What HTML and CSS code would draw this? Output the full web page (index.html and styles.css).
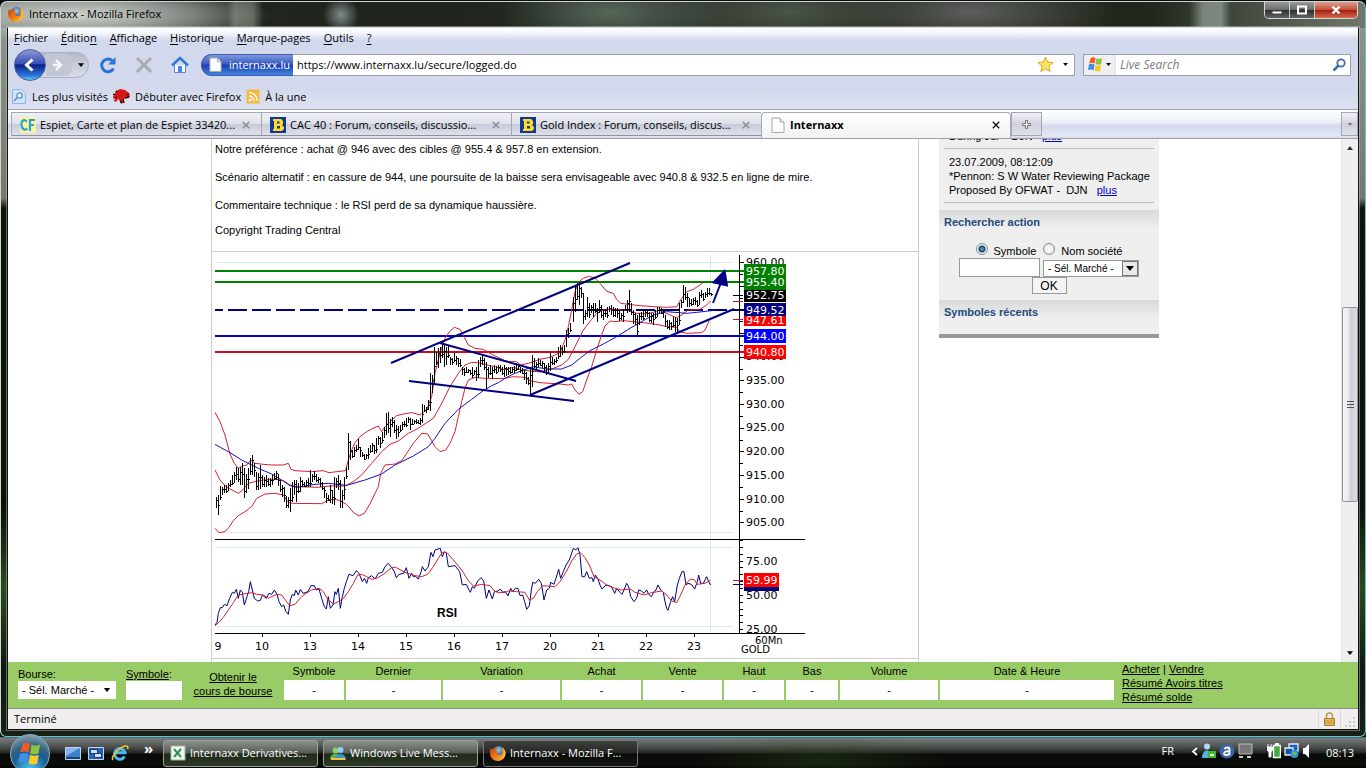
FILE: index.html
```html
<!DOCTYPE html>
<html lang="fr">
<head>
<meta charset="utf-8">
<title>Internaxx - Mozilla Firefox</title>
<link rel="stylesheet" href="styles.css">
</head>
<body>
<svg class="defs" width="0" height="0" aria-hidden="true">
  <defs>
    <radialGradient id="fxBlue" cx=".5" cy=".35" r=".6"><stop offset="0" stop-color="#8fd0f5"/><stop offset="1" stop-color="#173a86"/></radialGradient>
    <linearGradient id="fxOrange" x1="0" y1="0" x2="1" y2="1"><stop offset="0" stop-color="#c7430a"/><stop offset=".6" stop-color="#f58518"/><stop offset="1" stop-color="#ffd24a"/></linearGradient>
    <symbol id="firefox" viewBox="0 0 16 16">
      <circle cx="8.5" cy="7" r="6" fill="url(#fxBlue)"/>
      <path d="M1 3l1.500 1.500C4 3 6 3 7 4L6 6l3 1-2 1.500c1 2 4 2 5 0 1-2 0-4-2-6 4 .5 6 4 5.500 7C15 13 12 16 8 16S0 13 0 8.500C0 6 .4 4.500 1 3z" fill="url(#fxOrange)"/>
      <path d="M12 2c3 2 4 5 3 8-1 3-3 4-5 4.500 3-2 4-4 3.600-7C13.500 5 13 3.500 12 2z" fill="#ffc53a"/>
    </symbol>
    <symbol id="boursorama" viewBox="0 0 16 16">
      <path fill="#123a8c" d="M0 0h16v16H0z"/>
      <path fill="#ffd92e" d="M3 2h8l2 2v3l-1 1 2 2v2l-2 2H3v-2h1V4H3z"/>
      <path fill="#123a8c" d="M7 4.500h2.500v2H7zM7 9h3v2.500H7z"/>
    </symbol>
    <symbol id="page" viewBox="0 0 14 16">
      <path d="M1 1h8l4 4v10.500H1z" fill="#fdfdfd" stroke="#a9a9a9"/><path d="M9 1v4h4" fill="#eee" stroke="#a9a9a9"/>
    </symbol>
    <symbol id="cross" viewBox="0 0 10 10"><path d="M1 1l8 8M9 1L1 9" stroke="currentColor" stroke-width="1.600" fill="none"/></symbol>
    <symbol id="down" viewBox="0 0 8 5"><path d="M0 0h8L4 5z" fill="currentColor"/></symbol>
    <symbol id="winflag" viewBox="0 0 18 18">
      <path d="M4 2c2-1 4-1 5 0L8 8C6 7 4 7 2 8z" fill="#ee5a24"/><path d="M10 2.500c2 1 4 1 6 0L15 8.500c-2 1-4 1-6 0z" fill="#8bc53f"/>
      <path d="M2 9c2-1 4-1 6 0L7 15c-2-1-4-1-6 0z" fill="#3f8fe8"/><path d="M9 9.500c2 1 4 1 6 0L14 15.500c-2 1-4 1-6 0z" fill="#fbc926"/>
    </symbol>
  </defs>
</svg>

<div class="window">
  <header class="titlebar">
    <svg class="i16"><use href="#firefox"/></svg>
    <h1 class="window-title">Internaxx - Mozilla Firefox</h1>
    <div class="window-buttons">
      <button class="wb" aria-label="Réduire"><svg width="12" height="10"><path d="M1 6h10v3H1z" fill="#fff" stroke="#444"/></svg></button>
      <button class="wb wb-max" aria-label="Agrandir"><svg width="12" height="10"><path d="M2 1.500h8v7H2z" fill="none" stroke="#fff" stroke-width="2"/><path d="M4.500 4h3v2h-3z" fill="#333"/></svg></button>
      <button class="wb wb-close" aria-label="Fermer"><svg width="12" height="10"><path d="M2.500 1.500l7 7M9.500 1.500l-7 7" stroke="#fff" stroke-width="2.400"/></svg></button>
    </div>
  </header>

  <div class="client">
    <div class="chrome">
      <nav class="menubar" aria-label="Menu">
        <button><u>F</u>ichier</button><button><u>É</u>ditio<u>n</u></button><button><u>A</u>ffichage</button><button><u>H</u>istorique</button><button><u>M</u>arque-pages</button><button><u>O</u>utils</button><button><u>?</u></button>
      </nav>
      <div class="navbar">
        <div class="history">
          <button class="back" aria-label="Précédent"><svg width="16" height="16"><path d="M10.500 2.500L4.500 8l6 5.500" fill="none" stroke="#fff" stroke-width="3"/></svg></button>
          <button class="forward" aria-label="Suivant"><svg width="14" height="14"><path d="M4 2l5 5-5 5M1 7h7" fill="none" stroke="#f4f5f9" stroke-width="2.500"/></svg></button>
          <button class="recent" aria-label="Historique récent"><svg width="6" height="4"><use href="#down"/></svg></button>
        </div>
        <button class="tool" aria-label="Actualiser"><svg width="18" height="18"><path d="M14.500 12.500A6.300 6.300 0 1 1 13 4.500" fill="none" stroke="#2a72d8" stroke-width="3"/><path d="M16.500 1v7.500H9z" fill="#2a72d8"/></svg></button>
        <button class="tool" aria-label="Arrêter"><svg width="18" height="18"><path d="M2 2l14 14M16 2L2 16" stroke="#a9abb2" stroke-width="3"/></svg></button>
        <button class="tool" aria-label="Accueil"><svg width="18" height="18"><path d="M3.500 9v7.500h11V9" fill="#f4f8ff" stroke="#5b87cc"/><path d="M1 9.500L9 2l8 7.500" fill="none" stroke="#3478d6" stroke-width="2.500"/><path d="M7 10h4v6H7z" fill="#4a86dc"/></svg></button>
        <div class="url">
          <span class="site"><svg width="13" height="15"><use href="#page"/></svg>internaxx.lu</span>
          <input type="text" aria-label="Adresse" value="https://www.internaxx.lu/secure/logged.do">
          <svg width="17" height="17" viewBox="0 0 17 17"><path d="M8.500 1l2.200 5 5.300.6-4 3.600 1.100 5.300-4.600-2.700-4.600 2.700L5 10.200 1 6.600 6.300 6z" fill="#ffe066" stroke="#dfa31c"/></svg>
          <svg class="url-arrow" width="5" height="3"><use href="#down"/></svg>
        </div>
        <div class="search">
          <button class="engine" aria-label="Moteur"><svg width="17" height="17"><use href="#winflag"/></svg><svg width="5" height="3"><use href="#down"/></svg></button>
          <input type="text" aria-label="Recherche" placeholder="Live Search">
          <svg width="14" height="14"><circle cx="9" cy="5" r="3.700" fill="none" stroke="#3c6fb0" stroke-width="1.800"/><path d="M6.500 7.500L1.500 12.500" stroke="#3c6fb0" stroke-width="2.600"/></svg>
        </div>
      </div>
      <div class="bookmarks">
        <a href="#"><svg width="14" height="15"><path d="M.5.5h9l4 4v10H.500z" fill="#cfe3fa" stroke="#8db6e4"/><circle cx="7.500" cy="6.500" r="2.700" fill="#f5faff" stroke="#5b8fd0" stroke-width="1.300"/><path d="M5.500 8.500l-3.500 3.500" stroke="#5b8fd0" stroke-width="1.600"/></svg>Les plus visités</a>
        <a href="#"><svg width="17" height="15"><path d="M1 6l2-4 4-2 5 1 4 3 1 4-4 1-2 1v3l-3 2-1-3-2-2-2 3-2-1 1-3-3 1z" fill="#d81818"/><path d="M0 5l2 1M2 9l2-1M3 2l1 1M10 10l1 4M16 5l-2 1M12 9l4-1M7 12l2 2" stroke="#200" stroke-width="1.300"/></svg>Débuter avec Firefox</a>
        <a href="#"><svg width="14" height="15"><path d="M.5.5h13v14H.500z" fill="#f6b73c" stroke="#e3cf9a"/><circle cx="4" cy="11" r="1.500" fill="#fff"/><path d="M3 7a5 5 0 0 1 5 5M3 3.500a8.500 8.500 0 0 1 8.500 8.500" fill="none" stroke="#fff" stroke-width="1.500"/></svg>À la une</a>
      </div>
    </div>

    <div class="tabs">
      <div class="tab"><svg class="i16"><path d="M0 0h16v16H0z" fill="#fbf3a0"/><path d="M7 4.500C3 1 1 5 1.500 8.500S5 14 7.500 11.500M10 14V3h5M10 8h4" fill="none" stroke="#28a3cf" stroke-width="2.200"/></svg><a href="#">Espiet, Carte et plan de Espiet 33420...</a><button aria-label="Fermer"><svg width="8" height="8"><use href="#cross"/></svg></button></div>
      <div class="tab"><svg class="i16"><use href="#boursorama"/></svg><a href="#">CAC 40 : Forum, conseils, discussio...</a><button aria-label="Fermer"><svg width="8" height="8"><use href="#cross"/></svg></button></div>
      <div class="tab"><svg class="i16"><use href="#boursorama"/></svg><a href="#">Gold Index : Forum, conseils, discus...</a><button aria-label="Fermer"><svg width="8" height="8"><use href="#cross"/></svg></button></div>
      <div class="tab active"><svg class="i16"><use href="#page"/></svg><a href="#">Internaxx</a><button aria-label="Fermer"><svg width="8" height="8"><use href="#cross"/></svg></button></div>
      <button class="newtab" aria-label="Nouvel onglet"><svg width="9" height="9"><path d="M3.500.5h2v3h3v2h-3v3h-2v-3h-3v-2h3z" fill="#eee" stroke="#777"/></svg></button>
      <button class="alltabs" aria-label="Tous les onglets"><svg width="6" height="3"><use href="#down"/></svg></button>
    </div>

    <div class="view">
      <div class="page">
        <main class="article">
          <div class="prose">
            <p>Notre préférence : achat @ 946 avec des cibles @ 955.4 &amp; 957.8 en extension.</p>
            <p>Scénario alternatif : en cassure de 944, une poursuite de la baisse sera envisageable avec 940.8 &amp; 932.5 en ligne de mire.</p>
            <p>Commentaire technique : le RSI perd de sa dynamique haussière.</p>
            <p class="copy">Copyright Trading Central</p>
          </div>
          <div class="chart">
            <svg viewBox="212 252 594 406" width="594" height="406" role="img" aria-label="Cours de l'or, 60 minutes">
              <g class="guide"><path d="M215 262.500H733M215 532.500H733M215 547.500H733M215 626.500H733M710.500 255V632"/></g>
              <g class="levels">
                <path d="M215 271H744M215 282H744" stroke="#008000"/>
                <path d="M215 310H744" stroke="#000080" stroke-dasharray="19 5" stroke-dashoffset="11"/>
                <path d="M215 336H744" stroke="#0000cc"/>
                <path d="M215 352H744" stroke="#d00c1c"/>
              </g>
              <g class="axis">
                <path d="M739.500 255V633M215 539.500H805M215 633.500H805"/>
                <path id="ticks"/>
              </g>
              <g class="axis-text">
                <text x="746" y="266">960.00</text><text x="746" y="360">940.00</text><text x="746" y="384">935.00</text><text x="746" y="408">930.00</text><text x="746" y="431">925.00</text><text x="746" y="455">920.00</text><text x="746" y="479">915.00</text><text x="746" y="503">910.00</text><text x="746" y="526">905.00</text>
                <text x="746" y="565">75.00</text><text x="746" y="599">50.00</text><text x="746" y="633">25.00</text>
              </g>
              <g class="tags">
                <path d="M733 301.500h10M733 319.500h10M733 580.500h10" stroke="#d00c1c"/><path d="M733 295.500h10" stroke="#000"/><path d="M733 584.500h10" stroke="#000080"/>
                <path d="M744 314h42v12h-42z" fill="#f00"/><text x="746" y="324">947.61</text>
                <path d="M744 264h42v26h-42z" fill="#008000"/><text x="746" y="275">957.80</text><text x="746" y="286">955.40</text>
                <path d="M744 290h42v12h-42z" fill="#000"/><text x="746" y="299">952.75</text>
                <path d="M744 303h42v13h-42z" fill="#000080"/><text x="746" y="314">949.52</text>
                <path d="M744 329h42v14h-42z" fill="#00f"/><text x="746" y="340">944.00</text>
                <path d="M744 345h42v14h-42z" fill="#f00"/><text x="746" y="356">940.80</text>
                <path d="M744 586h35v5h-35z" fill="#000080"/><path d="M744 573h35v14h-35z" fill="#f00"/><text x="746" y="584">59.99</text>
              </g>
              <g class="axis-text days">
                <text x="218" y="650">9</text><text x="262" y="650">10</text><text x="310" y="650">13</text><text x="358" y="650">14</text><text x="406" y="650">15</text><text x="454" y="650">16</text><text x="502" y="650">17</text><text x="550" y="650">20</text><text x="598" y="650">21</text><text x="646" y="650">22</text><text x="694" y="650">23</text>
              </g>
              <g class="axis-text small"><text x="755" y="644">60Mn</text><text x="741" y="653">GOLD</text></g>
              <text class="rsi" x="437" y="617">RSI</text>
              <g class="curves" transform="translate(205 250) scale(.33333)">
                <path class="r" d="M30 487L45 515 60 555 75 612 88 640 100 655 112 648 125 645 138 630 150 640 175 643 200 645 235 645 250 640 258 658 270 662 320 665 355 662 372 668 395 665 422 662 430 630 440 600 450 578 465 560 485 545 500 537 520 528 530 545 540 530 555 515 575 497 600 491 620 488 645 495 665 480 680 440 690 370 705 310 720 265 735 243 748 232 765 238 778 262 790 285 810 295 835 298 860 313 885 325 900 332"/>
                <path class="r" d="M30 660L45 690 65 712 85 722 100 730 115 718 130 700 150 695 175 690 215 688 235 692 255 705 275 710 340 712 372 708 420 708 445 695 470 675 500 640 530 605 555 583 580 573 610 550 640 535 665 518 685 505 705 470 735 410 760 370 780 345 800 337 820 338 845 345 870 350 900 360"/>
                <path class="r" d="M30 835L42 848 60 845 72 832 85 812 100 797 120 785 140 770 155 745 180 732 210 730 235 735 248 755 262 760 350 761 375 748 400 750 425 763 445 787 462 798 478 790 495 762 510 730 520 710 527 670 540 645 570 642 590 632 605 610 625 580 650 550 668 552 680 572 690 590 705 605 722 600 735 580 750 545 760 500 770 455 780 415 790 390 810 382 850 386 900 385"/>
                <path class="b" d="M30 583L75 608 110 630 160 655 200 672 230 690 255 707 275 712 330 703 370 700 425 706 480 690 530 672 570 645 625 618 670 590 690 565 720 520 760 478 800 448 835 422 860 407 880 398 900 385"/>
              </g>
              <g class="curves" transform="translate(500 250) scale(.33333)">
                <path class="r" d="M15 332L30 335 50 335 62 345 85 340 120 328 150 322 180 308 195 270 205 230 215 180 225 125 235 97 250 85 265 79 285 84 300 100 320 124 340 130 350 148 362 160 385 163 420 167 460 170 500 172 530 170 545 145 560 125 580 118 600 105 610 97"/>
                <path class="r" d="M15 358L40 352 65 360 120 366 160 355 185 345 205 328 225 290 250 240 275 208 290 190 315 178 340 178 380 180 410 190 450 190 480 180 510 195 530 203 545 195 565 180 600 178 620 165 632 153"/>
                <path class="r" d="M15 385L40 380 75 382 90 392 120 398 180 402 205 405 215 402 225 420 237 433 248 425 260 390 275 350 290 300 305 255 315 228 330 213 345 215 370 212 400 215 430 218 480 225 500 230 530 232 540 245 560 250 605 248 615 240 628 212"/>
                <path class="b" d="M15 385L40 372 70 360 100 350 140 357 185 357 215 345 240 325 270 302 310 282 350 260 390 235 430 212 460 195 500 185 560 190 600 186 650 180"/>
              </g>
              <path id="bars"/>
              <g class="curves rsi-curves" transform="translate(205 535) scale(.33333)">
                <path class="n" d="M30 270L36 262 40 235 46 218 52 218 58 208 66 212 74 190 82 172 88 175 94 163 100 190 106 165 112 172 118 210 126 185 131 170 136 140 142 165 148 190 158 198 166 196 172 180 184 190 192 175 200 178 208 165 216 178 222 200 230 215 236 210 242 228 250 238 256 195 262 178 268 182 272 165 280 180 286 163 294 175 304 172 310 168 318 152 328 152 334 165 342 162 350 190 358 215 364 222 370 185 376 220 384 210 390 170 394 178 400 160 406 220 412 185 418 160 424 140 432 118 444 122 454 107 462 115 472 140 478 130 485 145 490 128 500 122 510 132 520 115 532 112 540 95 550 85 560 98 568 110 574 128 582 118 596 115 604 98 612 130 620 115 625 125 632 125 640 132 648 112 652 95 660 108 670 95 678 52 684 65 690 45 706 40 712 65 718 50 724 55 730 95 750 92 764 110 772 150 784 148 792 165 796 172 802 155 808 160 818 138 828 128 836 138 844 190 852 165 862 192 868 170 880 168 886 162 893 172 900 170"/>
                <path class="r" d="M30 272L42 262 55 247 70 225 85 203 100 180 115 177 140 173 155 178 175 180 190 190 215 178 230 180 245 200 255 212 270 208 285 190 300 177 320 165 342 160 355 170 370 195 385 207 400 200 415 190 430 170 445 145 458 120 470 118 485 125 500 133 515 130 540 115 560 97 572 97 600 112 630 122 650 125 668 118 685 95 700 70 712 52 725 52 745 75 770 105 790 137 805 153 830 148 855 152 868 168 880 173 900 172"/>
              </g>
              <g class="curves rsi-curves" transform="translate(500 535) scale(.33333)">
                <path class="n" d="M15 170L18 172 24 183 32 160 38 170 46 160 54 160 60 182 68 180 74 200 80 223 88 212 94 165 98 142 106 145 116 133 124 145 132 195 140 165 148 160 152 142 162 148 168 130 176 103 182 130 190 110 198 90 208 75 220 40 228 45 234 38 240 60 246 125 254 125 260 110 268 130 276 128 280 140 286 120 294 132 300 150 306 162 318 150 326 152 334 155 344 175 350 160 360 172 366 178 372 165 380 145 386 155 392 185 402 200 410 190 416 165 424 168 432 175 440 165 446 178 454 185 462 170 468 165 474 150 482 165 490 172 494 195 500 220 504 226 512 200 518 185 524 200 532 150 538 130 546 110 552 110 558 150 564 145 574 148 584 162 592 140 596 120 602 145 610 145 620 125 626 140 632 150"/>
                <path class="r" d="M15 172L25 168 50 170 75 172 88 195 100 190 112 170 128 152 165 155 180 140 200 108 215 78 230 57 242 53 255 68 268 90 282 125 300 135 320 150 345 160 365 165 390 162 405 172 432 180 455 173 485 168 500 180 515 198 530 203 542 180 555 150 570 133 582 133 592 148 615 145 632 136"/>
              </g>
              <g class="trend">
                <path d="M391 363L630 263M440 343L576 381M409 381L574 401M530 395L734 309M713 303L722 280"/>
                <path class="head" d="M724.500 271L727 285.500 713.500 282.500z"/>
              </g>
            </svg>
          </div>
        </main>

        <aside class="sidebar">
          <div class="news cut">During Jul - &nbsp;DJN &nbsp; <a href="#">plus</a></div>
          <div class="news">23.07.2009, 08:12:09<br>*Pennon: S W Water Reviewing Package<br>Proposed By OFWAT - &nbsp;DJN &nbsp; <a href="#">plus</a></div>
          <h2>Rechercher action</h2>
          <form class="find" onsubmit="return false">
            <div class="radios">
              <input type="radio" name="k" id="k1" checked><label for="k1">Symbole</label>
              <input type="radio" name="k" id="k2"><label for="k2">Nom société</label>
            </div>
            <div class="fields">
              <input type="text" aria-label="Recherche action">
              <span class="pick"><select aria-label="Marché"><option>- Sél. Marché -</option></select><span class="pick-btn"><svg width="8" height="5"><use href="#down"/></svg></span></span>
            </div>
            <button>OK</button>
          </form>
          <h2 class="last">Symboles récents</h2>
        </aside>
      </div>
      <div class="scrollbar" role="presentation">
        <svg width="6" height="4"><path d="M0 4h6L3 0z" fill="#333"/></svg>
        <div class="track"><div class="thumb"><i></i><i></i><i></i></div></div>
        <svg width="6" height="4"><use href="#down"/></svg>
      </div>
    </div>

    <div class="ticker">
      <div class="tk-field tk-market"><label for="mk">Bourse:</label><span class="pick"><select id="mk"><option>- Sél. Marché -</option></select><span class="pick-btn"><svg width="8" height="4"><use href="#down"/></svg></span></span></div>
      <div class="tk-field tk-symbol"><label for="sy"><u>Symbole</u>:</label><input id="sy" type="text"></div>
      <a class="tk-get" href="#">Obtenir le<br>cours de bourse</a>
      <table>
        <colgroup><col class="w60"><col class="w95"><col class="w117"><col class="w79"><col class="w79"><col class="w60"><col class="w52"><col class="w98"><col class="w174"></colgroup>
        <thead><tr><th>Symbole</th><th>Dernier</th><th>Variation</th><th>Achat</th><th>Vente</th><th>Haut</th><th>Bas</th><th>Volume</th><th>Date &amp; Heure</th></tr></thead>
        <tbody><tr><td>-</td><td>-</td><td>-</td><td>-</td><td>-</td><td>-</td><td>-</td><td>-</td><td>-</td></tr></tbody>
      </table>
      <div class="tk-links"><a href="#">Acheter</a> | <a href="#">Vendre</a><br><a href="#">Résumé Avoirs titres</a><br><a href="#">Résumé solde</a></div>
    </div>

    <footer class="status">
      <span>Terminé</span>
      <span class="lock"><svg width="11" height="14"><path d="M2.500 7V4a3 3 0 0 1 6 0v3" fill="none" stroke="#b99a4a" stroke-width="1.500"/><path d="M.5 6.500h10v7H.500z" fill="#e0b853" stroke="#a8812e"/><path d="M1 9h9M1 11h9" stroke="#c29a3c"/></svg></span>
      <svg class="grip" width="11" height="11"><path d="M8 1h2v2H8zM4 5h2v2H4zM8 5h2v2H8zM0 9h2v2H0zM4 9h2v2H4zM8 9h2v2H8z" fill="#c9c9ce"/></svg>
    </footer>
  </div>
</div>

<footer class="taskbar">
  <button class="start" aria-label="Démarrer"><svg width="26" height="26" viewBox="0 0 18 18"><use href="#winflag" width="18" height="18"/></svg></button>
  <div class="quick">
    <svg width="16" height="13"><path d="M.5.5h15v12H.500z" fill="#3f7fd0" stroke="#bcd4ef"/><path d="M1 1h14L1 9z" fill="#84b4ea"/><path d="M1 10h14v2H1z" fill="#1d3f7a"/></svg>
    <svg width="16" height="13"><path d="M.5.5h15v12H.500z" fill="#2a63b4" stroke="#bcd4ef"/><path d="M2.500 2.500h7v4h-7zM6.500 6.500h7v4h-7z" fill="#cfe2f7" stroke="#173a74"/></svg>
    <svg width="18" height="18"><path d="M13.500 12.500A5.300 5.300 0 1 1 14 8.700H5" fill="none" stroke="#4db4f2" stroke-width="3"/><path d="M2 16C-1 12 12 0 16.500 2.500 17 3 17 4 16.500 5" fill="none" stroke="#f2c230" stroke-width="1.600"/></svg>
    <span class="more">»</span>
  </div>
  <button class="task"><svg class="i16"><path d="M1 1h14v14H1z" fill="#f1f7f1" stroke="#9fb7a3"/><path d="M4 4l7 8M11 4l-7 8" stroke="#2f9152" stroke-width="2"/></svg><span>Internaxx Derivatives...</span></button>
  <button class="task"><svg class="i16"><circle cx="5.500" cy="5.500" r="3" fill="#8fd06a"/><path d="M0 14c0-7 11-7 11 0z" fill="#5fb347"/><circle cx="10.500" cy="5" r="3" fill="#8ccdf0"/><path d="M5 15c0-8 11-8 11 0z" fill="#3f93d0"/><path d="M1 13h14v2H1z" fill="#f0c33a"/></svg><span>Windows Live Mess...</span></button>
  <button class="task current"><svg class="i16"><use href="#firefox"/></svg><span>Internaxx - Mozilla F...</span></button>
  <div class="tray">
    <span class="lang">FR</span>
    <svg class="chev" width="7" height="9"><path d="M6 1L2 4.500 6 8" fill="none" stroke="#fff" stroke-width="1.800"/></svg>
    <svg width="15" height="16"><circle cx="6" cy="3.500" r="3" fill="#a9dcf6"/><path d="M1 15c0-10 10-10 10 0z" fill="#5aaee0"/><path d="M7 8h8v7H7z" fill="#3dbb2d"/><path d="M9 11h4v2H9z" fill="#fff"/></svg>
    <svg width="16" height="16"><circle cx="8" cy="8" r="7.500" fill="#3c64a4"/><path d="M5.500 6c1-2 5-2 5 0v6M10.500 8C4 8 4 12 7 12c2 0 3.500-1 3.500-2" fill="none" stroke="#fff" stroke-width="1.800"/></svg>
    <svg width="15" height="16"><path d="M1 1h13v10H1z" fill="#777" stroke="#bbb"/><path d="M1 13h4v2H1zM9 13h4v2H9z" fill="#ccc"/></svg>
    <svg class="gap" width="14" height="16"><path d="M6.500 2.500h7v12h-7z" fill="#3dae3d" stroke="#fff" stroke-width="1.500"/><path d="M8 0h4v2H8z" fill="#fff"/><path d="M1 1v3M4 1v3M0 4h5.500v3L4 9v5H2V9L0 7z" fill="#fff" stroke="#fff"/></svg>
    <svg width="16" height="16"><path d="M5 1h9v7H5z" fill="#1a5fc0" stroke="#e6eef8" stroke-width="1.300"/><path d="M1 5h8v7H1z" fill="#1550a8" stroke="#e6eef8" stroke-width="1.300"/><circle cx="10.500" cy="11" r="4" fill="#2f8fd8"/><path d="M8 10c2-3 3 1 5-1-1 4-3 5-5 1z" fill="#6cc04a"/></svg>
    <svg width="8" height="16"><path d="M0 5h2l4-4v14l-4-4H0z" fill="#fff"/></svg>
    <time>08:13</time>
  </div>
</footer>
<script src="chart.js"></script>
</body>
</html>
```

FILE: styles.css
```css
* { box-sizing: border-box; }
html, body { height: 100%; margin: 0; }
body {
  display: flex;
  flex-direction: column;
  overflow: hidden;
  background: #0b0e0b;
  font-family: "Open Sans", "Noto Sans", sans-serif;
  font-size: 11px;
  line-height: 16px;
  color: #000;
}
button, input, select { font: inherit; color: inherit; margin: 0; padding: 0; border: 0; background: none; border-radius: 0; outline: none; }
svg { display: block; flex: none; }
.defs { position: absolute; }
.i16 { width: 16px; height: 16px; }

/* window frame */
.window {
  flex: 1;
  min-height: 0;
  display: flex;
  flex-direction: column;
  margin-top: 1px;
  padding: 0 7px 6px;
  border: 1px solid #cfd6d2;
  border-right-color: #59c6dc;
  border-bottom-color: #59c6dc;
  border-radius: 7px 7px 6px 6px;
  background:
    radial-gradient(ellipse 190px 28px at 80px 13px, rgba(225,230,224,.85), rgba(190,196,190,.5) 60%, transparent),
    radial-gradient(circle 18px at 340px 13px, rgba(190,205,215,.6), transparent),
    linear-gradient(90deg, transparent 226px, rgba(170,180,165,.4) 234px, rgba(170,180,165,.4) 252px, transparent 262px) 0 0 / 100% 26px no-repeat,
    linear-gradient(90deg, transparent 1188px, rgba(190,205,200,.5) 1202px, rgba(190,205,200,.5) 1220px, transparent 1230px) 0 0 / 100% 26px no-repeat,
    radial-gradient(ellipse 110px 40px at 610px 10px, #57665a, transparent),
    radial-gradient(ellipse 140px 40px at 790px 10px, #4b5449, transparent),
    radial-gradient(ellipse 150px 40px at 970px 10px, #5c5f5b, transparent),
    linear-gradient(#8c938a, #74796d 170px, #0d150b 180px, #0b1208 480px, #2b4a1e 560px, #10180d 640px, #1a2417) 0 26px / 100% 100% no-repeat,
    linear-gradient(90deg, #6d736c 0, #555b55 120px, #20261f 260px, #1e241b 430px, #2a3129 700px, #161c12 900px, #20271c 1150px, #70776c);
}
.titlebar { display: flex; align-items: center; height: 25px; flex: none; }
.titlebar > .i16 { margin-bottom: 1px; }
.window-title { margin: 0 0 2px 5px; font-size: 11px; font-weight: 400; line-height: 16px; }
.window-buttons { display: flex; align-self: flex-start; margin-left: auto; border: 1px solid #d4d8d4; border-top: 0; border-radius: 0 0 5px 5px; overflow: hidden; }
.wb { display: flex; align-items: center; justify-content: center; width: 25px; height: 16px; border-right: 1px solid #c8ccc8; background: linear-gradient(#989c98, #696d69 48%, #2d312d 52%, #626662); }
.wb-close { width: 42px; border: 0; background: linear-gradient(#dba093, #c3513e 48%, #a41f0b 52%, #d36a50); }
.client { flex: 1; min-height: 0; display: flex; flex-direction: column; border: 1px solid #111; border-top-color: #d8dcd8; box-shadow: 0 0 0 1px rgba(200,208,200,.45); background: #fff; margin: 0 -1px 0 -1px; }

/* toolbars */
.chrome { flex: none; background: linear-gradient(#fff, #f4f6fc 5px, #d3d9ed 12px, #d3d8ec 60px, #dee2f1); border-bottom: 1px solid #a3a6b0; }
.menubar { display: flex; gap: 13px; height: 20px; padding-left: 6px; }
.menubar u { text-underline-offset: 2px; }
.navbar { display: flex; align-items: center; height: 33px; padding: 0 7px 0 6px; }
.history { display: flex; align-items: center; width: 75px; height: 26px; border: 1px solid #a9aec2; border-radius: 14px; background: linear-gradient(#b6bbcb, #d9dcea); }
.back { display: flex; align-items: center; justify-content: center; width: 32px; height: 32px; margin-left: -1px; flex: none; border: 1px solid #4f6096; border-radius: 50%; background: linear-gradient(#8e9ad8, #3a4db4 45%, #0b1f86 50%, #2a78d8 85%, #65c8f4); }
.forward { display: flex; align-items: center; justify-content: center; width: 26px; height: 22px; border-radius: 0 8px 8px 0; background: #c3c7d3; }
.recent { margin-left: 6px; }
.tool { margin-left: 18px; }
.history + .tool { margin-left: 10px; }
.url { flex: 1; display: flex; align-items: center; height: 22px; margin-left: 12px; border: 1px solid #9aa0ae; border-radius: 11px 0 0 11px; background: #fff; padding-right: 4px; }
.url input { flex: 1; min-width: 0; padding-left: 4px; }
.url-arrow { margin: 0 2px 0 9px; }
.site { display: flex; align-items: center; gap: 7px; width: 92px; height: 22px; margin: -1px 0 -1px -1px; padding-left: 7px; color: #fff; white-space: nowrap; border: 1px solid #3d5bb0; border-right: 0; border-radius: 11px 0 0 11px; background: linear-gradient(#7d98dc, #3a5cc4 45%, #1c3eae 50%, #3f86e0); }
.search { display: flex; align-items: center; width: 268px; height: 22px; margin-left: 8px; padding-right: 4px; border: 1px solid #9aa0ae; background: #fff; }
.engine { display: flex; align-items: center; gap: 2px; height: 20px; padding: 0 4px 0 3px; background: #efeff2; border-right: 1px solid #e2e2e6; }
.search input { flex: 1; min-width: 0; padding-left: 4px; font-size: 12px; }
.search input::placeholder { color: #7b7b7b; font-style: italic; opacity: 1; }
.bookmarks { display: flex; align-items: center; gap: 5px; height: 28px; padding: 3px 0 0 4px; }
.bookmarks a { display: flex; align-items: center; gap: 6px; color: #000; text-decoration: none; }
.bookmarks a + a { gap: 5px; }

/* tabs */
.tabs { flex: none; display: flex; align-items: flex-end; height: 29px; padding: 3px 0 2px 3px; border-bottom: 1px solid #9ea0a8; background: linear-gradient(#fff, #eff1fa 12px, #d3d9ed 16px, #e6e9f6 26px, #dcdce4 27px); }
.tab { display: flex; align-items: center; flex: 0 1 250px; min-width: 0; height: 24px; padding: 1px 11px 0 8px; border: 1px solid #a6a9b2; border-right: 0; border-bottom-color: #8e929c; background: linear-gradient(#f0f1f7, #dfe1ea 48%, #c8cbd9 52%, #dee0ea); }
.tab a { flex: 1; min-width: 0; overflow: hidden; white-space: nowrap; margin-left: 4px; color: #000; text-decoration: none; }
.tab button { color: #85868c; }
.tab.active { height: 26px; margin-bottom: -2px; padding: 0 10px 1px 8px; border-bottom: 0; border-right: 1px solid #a6a9b2; border-radius: 4px 4px 0 0; background: linear-gradient(#fff, #f2f2f4); font-weight: 700; }
.tab.active button { color: #111; }
.newtab, .alltabs { display: flex; align-items: center; justify-content: center; width: 31px; height: 24px; border: 1px solid #a6a9b2; background: linear-gradient(#f0f1f7, #d0d3df 52%, #dee0ea); }
.alltabs { width: 17px; margin-left: auto; color: #777; }

/* web page */
.view { flex: 1; min-height: 0; display: flex; font-family: "Liberation Sans", Arial, sans-serif; line-height: 14px; }
.page { flex: 1; min-width: 0; overflow: hidden; display: flex; justify-content: center; align-items: flex-start; gap: 20px; padding-left: 21px; }
.article { width: 708px; border: 1px solid #ccc; border-width: 0 1px; padding-bottom: 8px; }
.prose { padding: 3px 3px 14px; }
.prose p { margin: 0 0 14px; }
.prose .copy { margin: -3px 0 0; }
.chart { border: 1px solid #ccc; border-width: 1px 0; }
.guide path { stroke: #dce9ef; fill: none; }
.levels path { stroke-width: 2; fill: none; shape-rendering: crispEdges; }
.axis path { stroke: #000; fill: none; shape-rendering: crispEdges; }
.axis-text, .tags text { font: 11px "DejaVu Sans", Verdana, sans-serif; }
.days { text-anchor: middle; }
.small { font-size: 10px; }
.tags text { fill: #fff; }
.rsi { font: 700 12px "Liberation Sans", Arial, sans-serif; }
.curves path { fill: none; stroke-width: 3; }
.curves .r { stroke: #d2202e; }
.curves .b { stroke: #1410c0; }
.curves .n { stroke: #000080; }
#bars { stroke: #000; stroke-width: 1; fill: none; }
.trend path { stroke: #000080; stroke-width: 2; fill: none; }
.trend .head { fill: #000080; }

.sidebar { width: 220px; background: #efefef; border-bottom: 4px solid #999; }
.news { margin: 0 5px; padding: 6px 5px 5px; border-bottom: 1px solid #bbb; white-space: nowrap; }
.news.cut { margin-top: -16px; }
.news a { color: #00c; }
.sidebar h2 { margin: 7px 0 0; padding: 5px 5px 4px; height: 34px; font-size: 11px; line-height: 14px; color: #1d4b7d; background: linear-gradient(#d9d9d9, #efefef 18px); }
.sidebar h2.last { margin: 6px 0 0; }
.find { display: flex; flex-direction: column; align-items: center; }
.radios { display: flex; align-items: center; height: 14px; margin-top: -1px; }
.radios input { appearance: none; width: 12px; height: 12px; margin-bottom: 3px; border: 1px solid #8b8e92; border-radius: 50%; background: radial-gradient(#fff, #ddd); }
.radios input:checked { background: radial-gradient(#6fb5d8 0, #123f63 3px, #e8eef2 4px); }
.radios label { margin: 1px 7px 0 6px; }
.radios label:last-child { margin-right: 0; }
.fields { display: flex; align-items: flex-end; gap: 3px; height: 20px; }
.fields input { width: 81px; height: 19px; border: 1px solid #999; background: #fff; }
.pick { position: relative; display: block; }
.pick select { appearance: none; width: 96px; height: 17px; padding-left: 4px; font-size: 10px; line-height: 14px; background: #fff; border: 1px solid #999; }
.pick-btn { position: absolute; top: 1px; right: 1px; display: flex; align-items: center; justify-content: center; width: 16px; height: 15px; border: 1px solid #777; background: #e9e9e9; pointer-events: none; }
.find button { width: 35px; height: 17px; border: 1px solid #999; background: #f4f4f4; font-size: 12px; line-height: 14px; }

.scrollbar { flex: none; width: 17px; display: flex; flex-direction: column; align-items: center; padding: 7px 0; background: #efeff1; border-left: 1px solid #e2e2e6; }
.track { flex: 1; width: 16px; padding: 157px 0 149px; display: flex; }
.thumb { flex: 1; display: flex; flex-direction: column; gap: 1px; align-items: center; justify-content: center; border: 1px solid #94959b; border-radius: 2px; background: linear-gradient(90deg, #f6f6f6, #e6e6ea 45%, #cdced6 50%, #dddde3); }
.thumb i { width: 7px; height: 2px; border-top: 1px solid #555; }

/* quote strip */
.ticker { flex: none; display: flex; height: 47px; padding-left: 10px; background: #9c6; border-bottom: 1px solid #8f8f8f; font-family: "Liberation Sans", Arial, sans-serif; line-height: 14px; }
.tk-field { display: flex; flex-direction: column; padding-top: 5px; }
.tk-market { width: 98px; }
.tk-symbol { width: 56px; margin-left: 10px; }
.tk-symbol input { height: 19px; background: #fff; }
.ticker .pick select { width: 98px; height: 18px; border: 0; font-size: 11px; }
.ticker .pick-btn { border: 0; background: #fff; }
.tk-get { width: 98px; margin-left: 2px; padding-top: 8px; text-align: center; color: #000; }
.ticker table { table-layout: fixed; width: 834px; flex: none; align-self: flex-start; border-spacing: 2px 0; }
.ticker th { height: 18px; padding: 0; font-weight: 400; line-height: 18px; }
.ticker td { height: 20px; padding: 0; text-align: center; background: #fff; }
.w60 { width: 60px; } .w95 { width: 95px; } .w117 { width: 117px; } .w79 { width: 79px; } .w52 { width: 52px; } .w98 { width: 98px; } .w174 { width: 174px; }
.tk-links { margin-left: 6px; white-space: nowrap; }
.tk-links a { color: #000; }

.status { flex: none; display: flex; align-items: center; height: 20px; padding-left: 6px; background: #f0eeee; }
.lock { margin-left: auto; padding: 2px 5px; border: 1px solid #dcdadc; border-width: 0 1px; }
.grip { align-self: flex-end; margin: 0 2px 2px 4px; }

/* taskbar */
.taskbar { flex: none; display: flex; align-items: center; height: 31px; padding-left: 10px; color: #fff; border-top: 1px solid #566; background: radial-gradient(ellipse 130px 30px at 820px 22px, rgba(50,75,35,.4), transparent), linear-gradient(#7a7d7b, #4c504d 9px, #20231f 15px, #080a07 16px, #0a0d08 27px, #000); }
.start { display: flex; align-items: center; justify-content: center; width: 40px; height: 40px; margin-top: -4px; margin-bottom: -6px; border: 1px solid #87aec4; border-radius: 50%; background: radial-gradient(circle at 50% 90%, #4ac8f2, #1c5c94 45%, #35617f 60%, #a8bfca); }
.quick { display: flex; align-items: center; gap: 7px; width: 113px; padding-left: 15px; }
.more { align-self: flex-start; margin: -3px 0 0 8px; font-size: 15px; font-weight: 700; line-height: 14px; }
.task { display: flex; align-items: center; gap: 4px; flex: 0 1 155px; min-width: 0; height: 27px; padding: 0 6px; margin-right: 5px; border: 1px solid #9a9d9a; border-radius: 3px; background: linear-gradient(#8d918d, #565b56 48%, #1f2a1b 52%, #2d3a26); white-space: nowrap; }
.task.current { border-color: #777; background: linear-gradient(#3d403d, #242724 48%, #070907 52%, #151915); }
.task span { overflow: hidden; }
.tray { display: flex; align-items: center; gap: 3px; margin-left: auto; padding: 0 12px 4px 0; }
.tray .lang { margin-right: 14px; }
.tray .gap { margin-left: 11px; }
.tray time { margin: 4px 0 0 12px; }
```

FILE: chart.js
```js
// Hourly high-low pairs, in thirds of a pixel; each run starts at its own x.
const runs = [
  [205, 34, "740-775 735-795 708-750 710-735 705-730 705-728 700-722 690-710 675-705 665-700 650-690 655-695 650-705 640-705 655-745 672-730 655-718 625-675 615-675 640-680 665-720 670-720 645-718 675-710 680-712 675-710 685-708 685-710 675-705 670-690 662-690 672-708 690-725 705-740 710-755 738-775 740-775 715-785 695-755 690-735 690-755 700-730 680-725 690-712 695-710 690-710 685-712 660-712 672-695 662-690 672-695 682-700 685-710 695-720 710-745 728-760 735-752 705-760 720-762 680-765 685-715 675-720 690-775 720-775 680-750 650-688 550-660 572-630 600-625 592-620 585-605 568-600 590-620 605-622 612-630 612-628 595-628 585-610 580-605 585-612 565-608 558-585 562-595 545-580 530-565 490-555 486-548 508-560 500-530 510-550 525-568 528-562 525-545 515-540 512-532 505-530 500-520 505-540 508-525 510-522 508-522 510-522 505-525 462-520 465-485 470-490 450-480 370-482 375-430 290-405 305-345 295-355 290-340 275-325 285-350 290-345 285-325 320-345 325-345 310-335 318-345 325-350 328-352 350-375 355-378 350-370 358-370 360-375 350-385 360-375 350-392 330-385 320-350 315-345 325-360 335-418 350-385 345-375 350-388 345-370 348-372 345-365 345-365 350-375 345-380"],
  [500, 18, "350-378 352-375 350-372 352-370 348-368 340-362 345-360 350-370 355-372 360-390 365-402 380-405 355-432 315-410 325-355 335-360 325-350 330-348 332-355 340-362 345-375 340-368 308-362 320-345 328-345 320-338 290-328 285-320 290-315 285-310 240-290 235-265 218-245"],
  [500, 218, "140-215 108-185 100-150 95-165 110-145 130-222 180-210 142-200 160-205 165-190 160-200 160-190 175-215 150-190 165-205 180-210 178-200 170-205 168-185 165-195 170-200 175-200 175-205 180-212 188-210 178-215 165-180 150-190 120-185 160-195 180-222 190-225 195-258 190-225 185-210 180-210 180-200 178-202 185-215 190-218 190-225 180-208 170-200 172-190 175-192 178-205 195-230 210-238 210-240 215-240 202-232 200-245 205-245 160-225 150-175 105-160 110-150 130-170 145-172 148-168 145-165 140-165 150-170 125-165 120-145 130-152 125-145 115-140 115-135 128-138"]
];
let d = "";
for (const [left, start, list] of runs) {
  list.split(" ").forEach((pair, i) => {
    const [hi, lo] = pair.split("-").map(v => Math.round(250 + v / 3));
    const x = Math.round(left + (start + i * 6) / 3) + 0.5;
    const close = Math.round(hi + (lo - hi) * (i % 3 + 1) / 4) + 0.5;
    d += `M${x} ${hi}V${lo}M${x} ${close}h1.5`;
  });
}
document.getElementById("bars").setAttribute("d", d);

let t = "";
for (let i = 0; i < 23; i++) t += `M740 ${Math.round(262 + i * 11.84) + 0.5}h${i % 2 ? 3 : 4}`;
for (let y = 540; y < 633; y += 6.85) t += `M740 ${Math.round(y) + 0.5}h3`;
for (let x = 262; x < 700; x += 48) t += `M${x + 0.5} 634v3`;
document.getElementById("ticks").setAttribute("d", t);
```
